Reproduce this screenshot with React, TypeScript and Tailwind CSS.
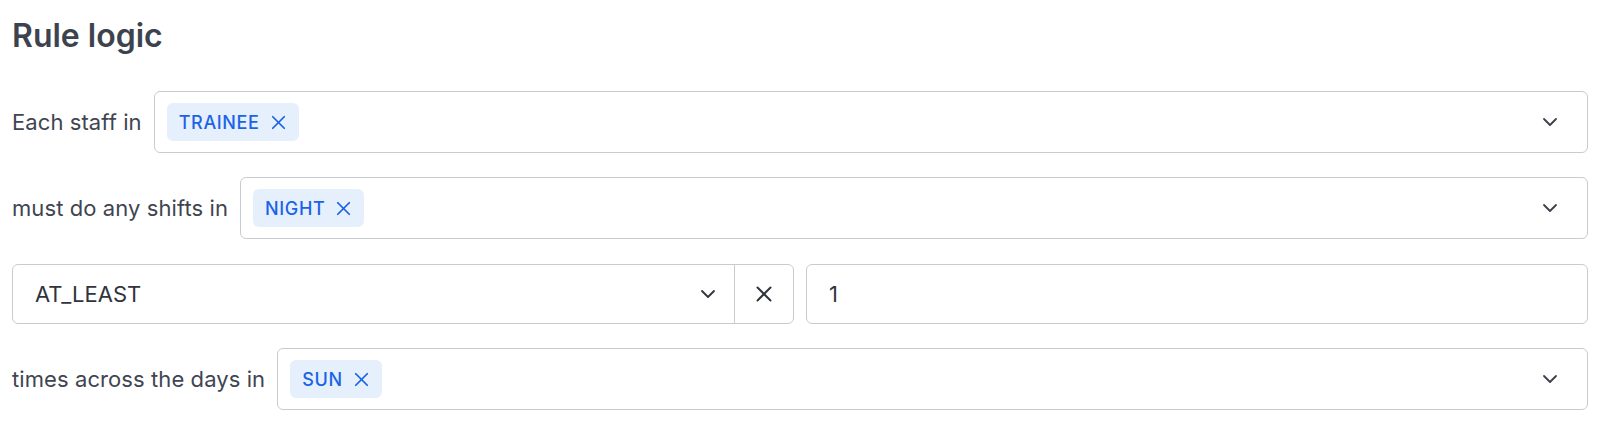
import { ChevronDown, X } from 'lucide-react';

const font = { fontFamily: 'Inter, "Noto Sans", sans-serif' };

function Chip({ label }: { label: string }) {
  return (
    <span className="inline-flex items-center gap-[7px] h-[38px] pl-[12px] pr-[9px] rounded-md bg-[#e6effc] text-[#1a63e6] text-[18px] font-medium tracking-[0.035em]">
      {label}
      <X className="w-[23px] h-[23px]" strokeWidth={1.8} />
    </span>
  );
}

function MultiSelect({ label, value }: { label: string; value: string }) {
  return (
    <div className="flex items-center gap-3">
      <span className="text-[22px] tracking-[0.004em] text-[#3f4551] whitespace-nowrap">{label}</span>
      <div className="flex-1 h-[62px] flex items-center justify-between pl-3 pr-[25px] border border-[#c9cbd1] rounded-md bg-white">
        <Chip label={value} />
        <ChevronDown className="w-[24px] h-[24px] text-[#3a3f4a]" strokeWidth={1.8} />
      </div>
    </div>
  );
}

export default function App() {
  return (
    <div className="p-3 bg-white min-h-[422px]" style={font}>
      <h2 className="text-[32px] font-semibold text-[#3d434e] leading-10 mt-[4px] mb-[35px]">Rule logic</h2>

      <div className="flex flex-col gap-6">
        <MultiSelect label="Each staff in" value="TRAINEE" />
        <MultiSelect label="must do any shifts in" value="NIGHT" />

        <div className="grid grid-cols-2 gap-3 pt-px">
          <div className="h-[60px] flex border border-[#c9cbd1] rounded-md bg-white">
            <div className="flex-1 flex items-center justify-between pl-[22px] pr-[14px] text-[22px] text-[#2f343d]">
              <span>AT_LEAST</span>
              <ChevronDown className="w-[24px] h-[24px] text-[#2f343d]" strokeWidth={1.8} />
            </div>
            <div className="w-[59px] border-l border-[#c9cbd1] flex items-center justify-center">
              <X className="w-[26px] h-[26px] text-[#2f343d]" strokeWidth={1.8} />
            </div>
          </div>
          <div className="h-[60px] flex items-center pl-[22px] border border-[#c9cbd1] rounded-md bg-white text-[22px] text-[#2f343d]">
            1
          </div>
        </div>

        <MultiSelect label="times across the days in" value="SUN" />
      </div>
    </div>
  );
}
